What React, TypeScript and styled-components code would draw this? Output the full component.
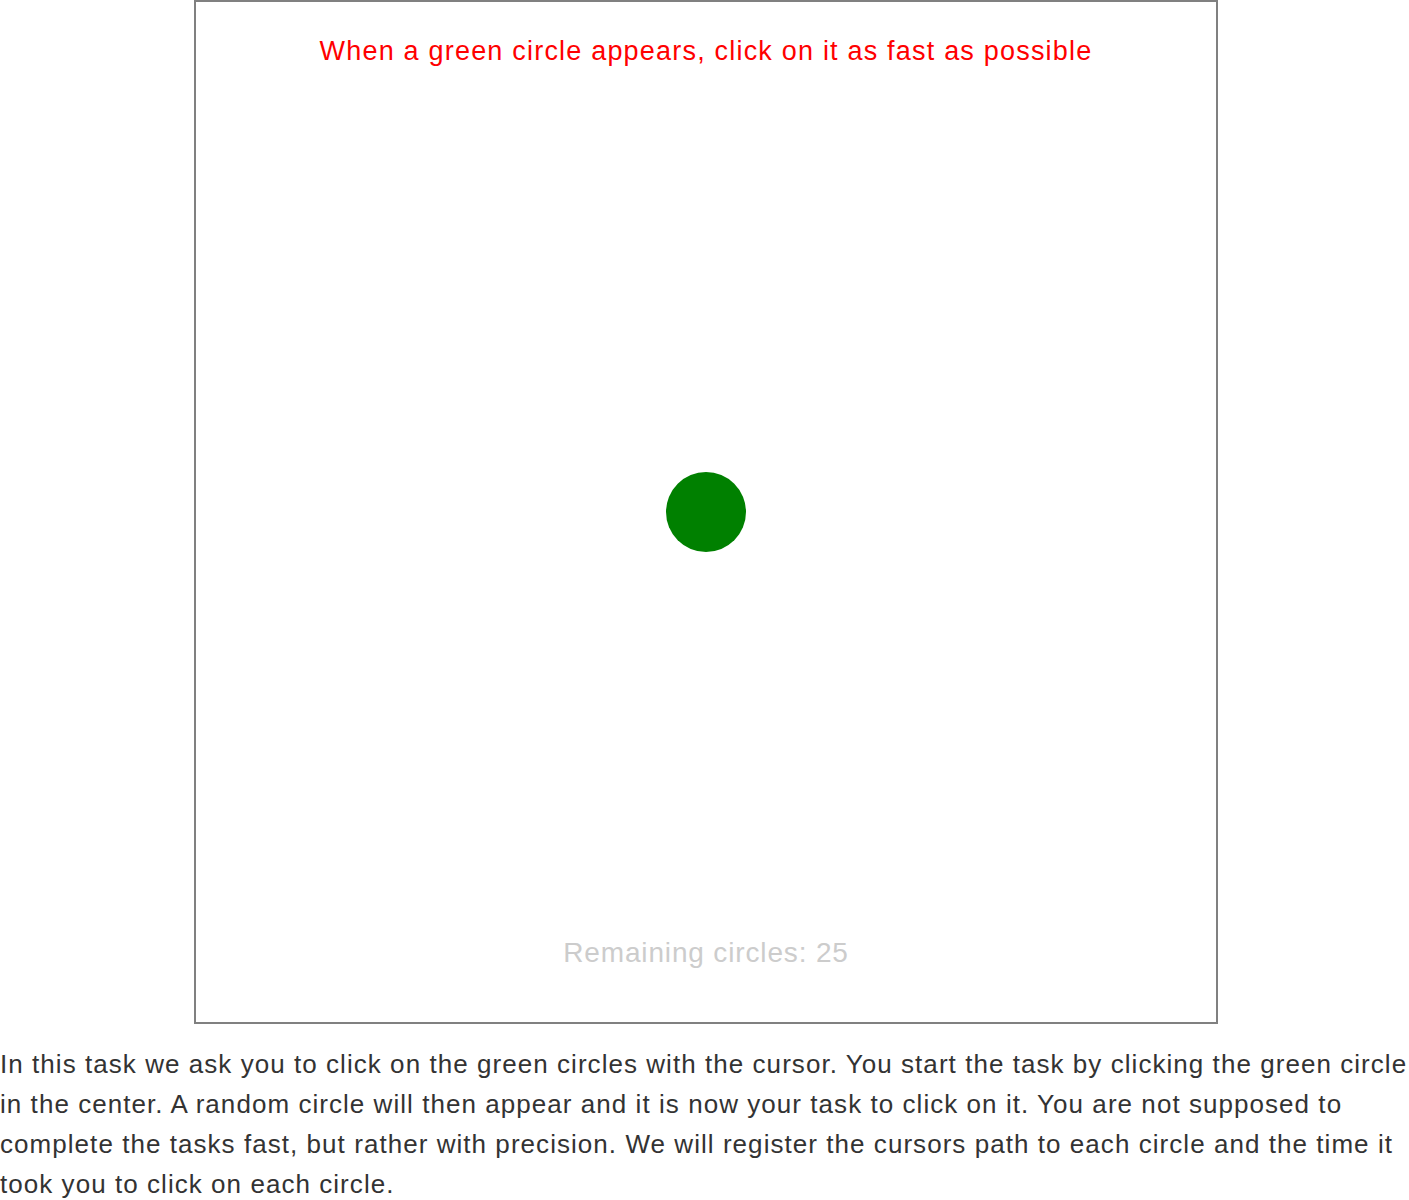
import React from "react";
import styled, { createGlobalStyle } from "styled-components";

const Global = createGlobalStyle`
  html, body { margin: 0; padding: 0; background: #fff; }
  body { font-family: "Liberation Sans", Arial, Helvetica, sans-serif; }
`;

const Page = styled.div`
  display: flex;
  flex-direction: column;
  align-items: center;
`;

const Board = styled.div`
  box-sizing: border-box;
  width: 1024px;
  height: 1024px;
  margin-left: 3px;
  border: 2px solid #808080;
  display: grid;
  grid-template-rows: 1fr auto 1fr;
  justify-items: center;
`;

const Instruction = styled.div`
  align-self: start;
  margin-top: 34px;
  color: #ff0000;
  font-size: 27px;
  line-height: 30px;
  letter-spacing: 1.2px;
`;

const Circle = styled.div<{ $size: number; $color: string }>`
  width: ${(p) => p.$size}px;
  height: ${(p) => p.$size}px;
  border-radius: 50%;
  background: ${(p) => p.$color};
`;

const Remaining = styled.div`
  align-self: end;
  margin-bottom: 52px;
  color: #cccccc;
  font-size: 28px;
  line-height: 34px;
  letter-spacing: 0.85px;
`;

const Description = styled.p`
  align-self: stretch;
  margin: 20px 0 0;
  color: #333333;
  font-size: 26px;
  line-height: 40px;
  letter-spacing: 1.05px;
`;

export default function App() {
  return (
    <>
      <Global />
      <Page>
        <Board>
          <Instruction>When a green circle appears, click on it as fast as possible</Instruction>
          <Circle $size={80} $color="#008000" />
          <Remaining>Remaining circles: 25</Remaining>
        </Board>
        <Description>
          In this task we ask you to click on the green circles with the cursor. You start the task by clicking the green circle in the center. A random circle will then appear and it is now your task to click on it. You are not supposed to complete the tasks fast, but rather with precision. We will register the cursors path to each circle and the time it took you to click on each circle.
        </Description>
      </Page>
    </>
  );
}
